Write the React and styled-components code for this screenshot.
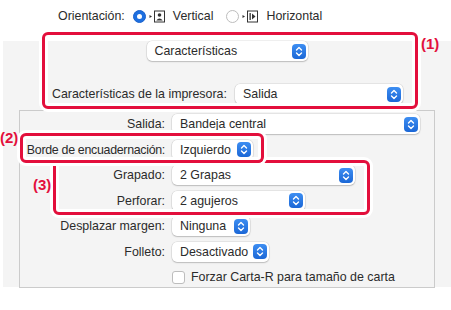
import React from 'react'
import styled, { createGlobalStyle } from 'styled-components'

const Global = createGlobalStyle`
  html, body { margin: 0; padding: 0; background: #fff; }
`;

const Root = styled.div`
  position: relative;
  width: 451px;
  height: 310px;
  overflow: hidden;
  background: #fff;
  font-family: "Liberation Sans", Arial, sans-serif;
  font-size: 12.4px;
  color: #2b2b2b;
`;

const OrientationRow = styled.div`
  display: flex;
  align-items: center;
  height: 32px;
  padding-left: 58px;
`;

const Option = styled.div`
  display: flex;
  align-items: center;
  margin-left: ${p => p.$gap}px;
  gap: 3px;
`;

const Radio = styled.span`
  box-sizing: border-box;
  width: 13px;
  height: 13px;
  border-radius: 50%;
  display: inline-flex;
  align-items: center;
  justify-content: center;
  background: ${p => (p.$on ? '#1d6fe0' : '#fff')};
  border: 1px solid ${p => (p.$on ? '#1a62cc' : '#bdbdbd')};
  &::after {
    content: '';
    display: ${p => (p.$on ? 'block' : 'none')};
    width: 5px;
    height: 5px;
    border-radius: 50%;
    background: #fff;
  }
`;

const OptionText = styled.span`
  margin-left: 4px;
`;

const Panel = styled.div`
  margin: 19px 0 0 3px;
  height: 246px;
  background: #f4f4f4;
`;

const PanelHeader = styled.div`
  display: flex;
  justify-content: center;
  margin-top: -10px;
`;

const PrinterRow = styled.div`
  display: flex;
  align-items: center;
  margin-top: 23px;
  padding-left: 49px;
`;

const PrinterLabel = styled.span`
  width: 183px;
  white-space: nowrap;
`;

const GroupBox = styled.div`
  box-sizing: border-box;
  margin: 6px 0 0 16px;
  width: 416px;
  height: 178px;
  border: 1px solid #cbcbcb;
  background: #f4f4f4;
  display: grid;
  grid-template-columns: 145px auto;
  grid-auto-rows: 20px;
  column-gap: 7px;
  row-gap: 5.5px;
  padding-top: 3px;
  align-content: start;
  justify-content: start;
`;

const Label = styled.span`
  justify-self: end;
  align-self: center;
  white-space: nowrap;
  letter-spacing: ${p => (p.$tight ? '-0.3px' : 'normal')};
`;

const Popup = styled.div`
  box-sizing: border-box;
  width: ${p => p.$w}px;
  height: 20px;
  display: flex;
  align-items: center;
  justify-content: space-between;
  padding: 0 2px 0 8px;
  background: #fff;
  border-radius: 5px;
  box-shadow: 0 0 0 0.5px rgba(0, 0, 0, 0.12), 0 1px 1.5px rgba(0, 0, 0, 0.18);
  white-space: nowrap;
`;

const Stepper = styled.span`
  width: 14px;
  height: 15px;
  border-radius: 4px;
  background: linear-gradient(#3d8ef2, #1b67d6);
  display: inline-flex;
  align-items: center;
  justify-content: center;
`;

const CheckRow = styled.div`
  display: flex;
  align-items: center;
  gap: 6px;
`;

const Checkbox = styled.span`
  box-sizing: border-box;
  width: 13px;
  height: 13px;
  border-radius: 3px;
  background: #fff;
  border: 1px solid #bdbdbd;
`;

const Mark = styled.div`
  position: absolute;
  box-sizing: border-box;
  left: ${p => p.$x}px;
  top: ${p => p.$y}px;
  width: ${p => p.$w}px;
  height: ${p => p.$h}px;
  border: 3px solid #e30f3c;
  border-radius: 6px;
  box-shadow: 0 0 0 3px #fff, inset 0 0 0 3px #fff;
`;

const MarkNumber = styled.span`
  position: absolute;
  left: ${p => p.$x}px;
  top: ${p => p.$y}px;
  font-weight: bold;
  font-size: 15px;
  color: #e30f3c;
`;

const Chevrons = () => (
  <svg width="8" height="11" viewBox="0 0 8 11">
    <path d="M1.5 4 L4 1.5 L6.5 4 M1.5 7 L4 9.5 L6.5 7" fill="none" stroke="#fff" strokeWidth="1.4" strokeLinecap="round" strokeLinejoin="round" />
  </svg>
);

const Select = ({ w, children }) => (
  <Popup $w={w}>
    <span>{children}</span>
    <Stepper><Chevrons /></Stepper>
  </Popup>
);

const PortraitIcon = () => (
  <svg width="17" height="13" viewBox="0 0 17 13">
    <path d="M0.5 5 L3 6.5 L0.5 8 Z" fill="#333" />
    <rect x="5.5" y="1" width="10" height="11" fill="none" stroke="#333" strokeWidth="1" />
    <circle cx="10.5" cy="5" r="1.8" fill="#333" />
    <path d="M7.3 10.5 Q10.5 6.5 13.7 10.5 Z" fill="#333" />
  </svg>
);

const LandscapeIcon = () => (
  <svg width="17" height="13" viewBox="0 0 17 13">
    <path d="M0.5 5 L3 6.5 L0.5 8 Z" fill="#333" />
    <rect x="5.5" y="1" width="10" height="11" fill="none" stroke="#333" strokeWidth="1" />
    <rect x="7.5" y="3" width="1.3" height="7" fill="#333" />
    <path d="M10 3.5 L13.5 6.5 L10 9.5 Z" fill="#333" />
  </svg>
);

export default function App() {
  return (
    <Root>
      <Global />
      <OrientationRow>
        <span>Orientación:</span>
        <Option $gap={8}>
          <Radio $on />
          <PortraitIcon />
          <OptionText>Vertical</OptionText>
        </Option>
        <Option $gap={13}>
          <Radio />
          <LandscapeIcon />
          <OptionText>Horizontal</OptionText>
        </Option>
      </OrientationRow>

      <Panel>
        <PanelHeader>
          <Select w={161}>Características</Select>
        </PanelHeader>
        <PrinterRow>
          <PrinterLabel>Características de la impresora:</PrinterLabel>
          <Select w={168}>Salida</Select>
        </PrinterRow>
        <GroupBox>
          <Label>Salida:</Label>
          <Select w={248}>Bandeja central</Select>
          <Label $tight>Borde de encuadernación:</Label>
          <Select w={81}>Izquierdo</Select>
          <Label>Grapado:</Label>
          <Select w={183}>2 Grapas</Select>
          <Label>Perforar:</Label>
          <Select w={133}>2 agujeros</Select>
          <Label>Desplazar margen:</Label>
          <Select w={78}>Ninguna</Select>
          <Label>Folleto:</Label>
          <Select w={97}>Desactivado</Select>
          <span />
          <CheckRow>
            <Checkbox />
            <span>Forzar Carta-R para tamaño de carta</span>
          </CheckRow>
        </GroupBox>
      </Panel>

      <Mark $x={42} $y={32} $w={376} $h={77} />
      <Mark $x={53} $y={160} $w={317} $h={55} />
      <Mark $x={20} $y={133} $w={244} $h={30} />
      <MarkNumber $x={421} $y={35}>(1)</MarkNumber>
      <MarkNumber $x={0} $y={129}>(2)</MarkNumber>
      <MarkNumber $x={33} $y={176}>(3)</MarkNumber>
    </Root>
  );
}
